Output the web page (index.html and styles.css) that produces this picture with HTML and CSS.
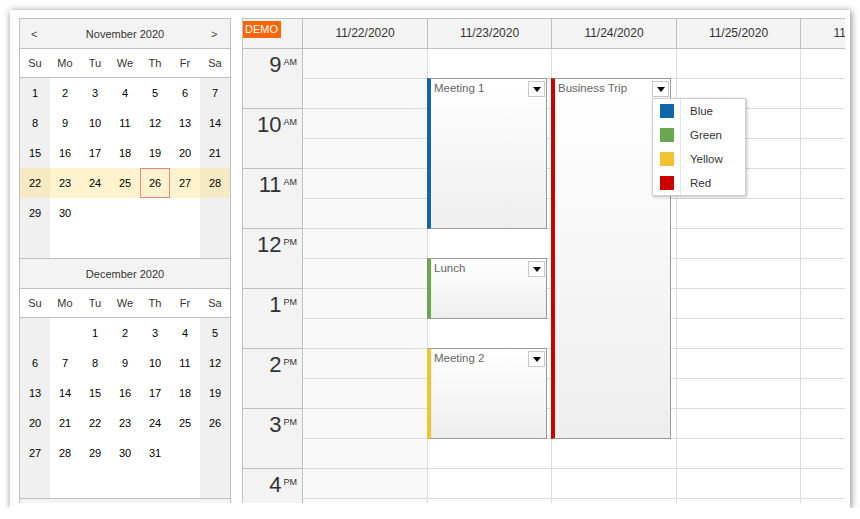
FILE: index.html
```html
<!DOCTYPE html>
<html lang="en">

<head>
    <meta charset="UTF-8">
    <meta name="viewport" content="width=device-width, initial-scale=1.0">
    <title>Calendar</title>
    <link rel="stylesheet" href="styles.css">
</head>

<body>
    <div class="frame">
        <!-- navigator -->
        <div class="nav">
            <div class="month">
                <div class="title"><span class="arrow">&lt;</span><span>November 2020</span><span class="arrow">&gt;</span></div>
                <div class="dow"><span>Su</span><span>Mo</span><span>Tu</span><span>We</span><span>Th</span><span>Fr</span><span>Sa</span></div>
                <div class="days">
                    <span class="we">1</span><span>2</span><span>3</span><span>4</span><span>5</span><span>6</span><span class="we">7</span>
                    <span class="we">8</span><span>9</span><span>10</span><span>11</span><span>12</span><span>13</span><span class="we">14</span>
                    <span class="we">15</span><span>16</span><span>17</span><span>18</span><span>19</span><span>20</span><span class="we">21</span>
                    <span class="we sel">22</span><span class="sel">23</span><span class="sel">24</span><span class="sel">25</span><span class="sel today">26</span><span class="sel">27</span><span class="we sel">28</span>
                    <span class="we">29</span><span>30</span><span></span><span></span><span></span><span></span><span class="we"></span>
                    <span class="we"></span><span></span><span></span><span></span><span></span><span></span><span class="we"></span>
                </div>
            </div>
            <div class="month">
                <div class="title"><span class="arrow"></span><span>December 2020</span><span class="arrow"></span></div>
                <div class="dow"><span>Su</span><span>Mo</span><span>Tu</span><span>We</span><span>Th</span><span>Fr</span><span>Sa</span></div>
                <div class="days">
                    <span class="we"></span><span></span><span>1</span><span>2</span><span>3</span><span>4</span><span class="we">5</span>
                    <span class="we">6</span><span>7</span><span>8</span><span>9</span><span>10</span><span>11</span><span class="we">12</span>
                    <span class="we">13</span><span>14</span><span>15</span><span>16</span><span>17</span><span>18</span><span class="we">19</span>
                    <span class="we">20</span><span>21</span><span>22</span><span>23</span><span>24</span><span>25</span><span class="we">26</span>
                    <span class="we">27</span><span>28</span><span>29</span><span>30</span><span>31</span><span></span><span class="we"></span>
                    <span class="we"></span><span></span><span></span><span></span><span></span><span></span><span class="we"></span>
                </div>
            </div>
            <!-- next month, only its top edge is visible -->
            <div class="month">
                <div class="title"></div>
            </div>
        </div>

        <!-- calendar -->
        <div class="cal">
            <div class="cal-head">
                <div class="corner"><span class="demo">DEMO</span></div>
                <div class="col-head">11/22/2020</div>
                <div class="col-head">11/23/2020</div>
                <div class="col-head">11/24/2020</div>
                <div class="col-head">11/25/2020</div>
                <div class="col-head">11/26/2020</div>
            </div>
            <div class="cal-body">
                <div class="times">
                    <div class="hour"><span class="num">9</span><span class="ampm">AM</span></div>
                    <div class="hour"><span class="num">10</span><span class="ampm">AM</span></div>
                    <div class="hour"><span class="num">11</span><span class="ampm">AM</span></div>
                    <div class="hour"><span class="num">12</span><span class="ampm">PM</span></div>
                    <div class="hour"><span class="num">1</span><span class="ampm">PM</span></div>
                    <div class="hour"><span class="num">2</span><span class="ampm">PM</span></div>
                    <div class="hour"><span class="num">3</span><span class="ampm">PM</span></div>
                    <div class="hour"><span class="num">4</span><span class="ampm">PM</span></div>
                </div>
                <div class="col off">
                    <div class="cell"></div><div class="cell"></div><div class="cell"></div><div class="cell"></div>
                    <div class="cell"></div><div class="cell"></div><div class="cell"></div><div class="cell"></div>
                    <div class="cell"></div><div class="cell"></div><div class="cell"></div><div class="cell"></div>
                    <div class="cell"></div><div class="cell"></div><div class="cell"></div><div class="cell"></div>
                </div>
                <div class="col">
                    <div class="cell"></div><div class="cell"></div><div class="cell"></div><div class="cell"></div>
                    <div class="cell"></div><div class="cell"></div><div class="cell"></div><div class="cell"></div>
                    <div class="cell"></div><div class="cell"></div><div class="cell"></div><div class="cell"></div>
                    <div class="cell"></div><div class="cell"></div><div class="cell"></div><div class="cell"></div>
                    <div class="event blue" style="top: 29px; height: 151px;">Meeting 1<span class="btn"></span></div>
                    <div class="event green" style="top: 209px; height: 61px;">Lunch<span class="btn"></span></div>
                    <div class="event yellow" style="top: 299px; height: 91px;">Meeting 2<span class="btn"></span></div>
                </div>
                <div class="col">
                    <div class="cell"></div><div class="cell"></div><div class="cell"></div><div class="cell"></div>
                    <div class="cell"></div><div class="cell"></div><div class="cell"></div><div class="cell"></div>
                    <div class="cell"></div><div class="cell"></div><div class="cell"></div><div class="cell"></div>
                    <div class="cell"></div><div class="cell"></div><div class="cell"></div><div class="cell"></div>
                    <div class="event red" style="top: 29px; height: 361px;">Business Trip<span class="btn"></span></div>
                </div>
                <div class="col">
                    <div class="cell"></div><div class="cell"></div><div class="cell"></div><div class="cell"></div>
                    <div class="cell"></div><div class="cell"></div><div class="cell"></div><div class="cell"></div>
                    <div class="cell"></div><div class="cell"></div><div class="cell"></div><div class="cell"></div>
                    <div class="cell"></div><div class="cell"></div><div class="cell"></div><div class="cell"></div>
                </div>
                <div class="col">
                    <div class="cell"></div><div class="cell"></div><div class="cell"></div><div class="cell"></div>
                    <div class="cell"></div><div class="cell"></div><div class="cell"></div><div class="cell"></div>
                    <div class="cell"></div><div class="cell"></div><div class="cell"></div><div class="cell"></div>
                    <div class="cell"></div><div class="cell"></div><div class="cell"></div><div class="cell"></div>
                </div>
            </div>

            <!-- context menu -->
            <div class="menu">
                <div class="item"><span class="icon"><i class="sq blue"></i></span><span class="label">Blue</span></div>
                <div class="item"><span class="icon"><i class="sq green"></i></span><span class="label">Green</span></div>
                <div class="item"><span class="icon"><i class="sq yellow"></i></span><span class="label">Yellow</span></div>
                <div class="item"><span class="icon"><i class="sq red"></i></span><span class="label">Red</span></div>
            </div>
        </div>
    </div>
</body>

</html>
```

FILE: styles.css
```css
* {
    padding: 0;
    margin: 0;
    box-sizing: border-box;
}

body {
    font-family: "Liberation Sans", Arial, sans-serif;
    background-color: #fff;
}

/* frame with shadow */
.frame {
    margin: 10px 0 0 10px;
    width: 840px;
    height: 498px;
    background-color: #fff;
    box-shadow: 1px 1px 7px rgba(0, 0, 0, 0.5);
    padding: 8px 5px 0 9px;
    display: flex;
    gap: 11px;
}

/* navigator */
.nav {
    width: 212px;
    height: 485px;
    border-left: 1px solid #c0c0c0;
    border-right: 1px solid #c0c0c0;
    overflow: hidden;
    flex: none;
    font-size: 11px;
}

.nav .title {
    height: 30px;
    border-top: 1px solid #c0c0c0;
    background-color: #f3f3f3;
    color: #333;
    display: flex;
    align-items: center;
    justify-content: space-between;
    padding: 0 11px;
}

.nav .arrow {
    width: 8px;
    color: #444;
}

.nav .dow {
    height: 29px;
    border-top: 1px solid #c0c0c0;
    display: grid;
    grid-template-columns: repeat(7, 30px);
    align-items: center;
    text-align: center;
    color: #333;
}

.nav .days {
    border-top: 1px solid #c0c0c0;
    display: grid;
    grid-template-columns: repeat(7, 30px);
    grid-auto-rows: 30px;
}

.nav .days span {
    line-height: 30px;
    text-align: center;
    color: #000;
}

.nav .days span.we {
    background-color: #f0f0f0;
}

.nav .days span.sel {
    background-color: #fff3cf;
}

.nav .days span.we.sel {
    background-color: #f6eac5;
}

.nav .days span.today {
    box-shadow: inset 0 0 0 1px #ee8585;
}

/* calendar */
.cal {
    position: relative;
    width: 603px;
    height: 485px;
    border-left: 1px solid #c0c0c0;
    border-top: 1px solid #c0c0c0;
    overflow: hidden;
    flex: none;
}

.cal-head {
    display: flex;
    height: 30px;
    border-bottom: 1px solid #c0c0c0;
    background-color: #f3f3f3;
}

.corner {
    flex: none;
    width: 60px;
    border-right: 1px solid #c0c0c0;
}

.demo {
    display: inline-block;
    background-color: #ff6600;
    color: #fff;
    font-size: 11px;
    line-height: 17px;
    padding: 0 3px 0 2px;
    margin-top: 0;
}

.col-head {
    flex: none;
    width: 125px;
    border-right: 1px solid #c0c0c0;
    font-size: 12px;
    color: #333;
    text-align: center;
    line-height: 29px;
    white-space: nowrap;
}

.col-head:nth-child(odd),
.col:nth-child(odd) {
    width: 124px;
}

.cal-body {
    display: flex;
}

.times {
    flex: none;
    width: 60px;
    border-right: 1px solid #c0c0c0;
    background-color: #f3f3f3;
}

.hour {
    height: 60px;
    border-bottom: 1px solid #c0c0c0;
    display: flex;
    justify-content: flex-end;
    align-items: flex-start;
    padding: 5px 5px 0 0;
    color: #333;
}

.hour .num {
    font-size: 22px;
    line-height: 22px;
}

.hour .ampm {
    font-size: 9px;
    line-height: 9px;
    margin: 4px 0 0 2px;
}

.col {
    position: relative;
    flex: none;
    width: 125px;
    border-right: 1px solid #dcdcdc;
}

.col .cell {
    height: 30px;
    border-bottom: 1px solid #dcdcdc;
}

.col.off {
    background-color: #f9f9f9;
}

/* events */
.event {
    position: absolute;
    left: -1px;
    width: 120px;
    border: 1px solid #999;
    border-left-width: 4px;
    background: linear-gradient(#fff, #eee);
    font-size: 11.5px;
    line-height: 14px;
    color: #666;
    padding: 2px 0 0 3px;
    white-space: nowrap;
}

.event.blue {
    border-left-color: #1066a8;
}

.event.green {
    border-left-color: #6aa84f;
}

.event.yellow {
    border-left-color: #f1c232;
}

.event.red {
    border-left-color: #cc0000;
}

.event .btn {
    position: absolute;
    top: 2px;
    right: 1px;
    width: 17px;
    height: 16px;
    border: 1px solid #c8c8c8;
    background-color: #fff;
}

/* triangle */
.event .btn::before {
    content: "";
    position: absolute;
    left: 4px;
    top: 5px;
    border-width: 5px 4px 0 4px;
    border-style: solid;
    border-color: #000 transparent transparent transparent;
}

/* menu */
.menu {
    position: absolute;
    left: 409px;
    top: 79px;
    width: 94px;
    height: 98px;
    background-color: #fff;
    border: 1px solid #cfcfcf;
    box-shadow: 1px 1px 3px rgba(0, 0, 0, 0.25);
    font-size: 11.5px;
    color: #333;
}

.menu .item {
    display: flex;
    align-items: center;
    height: 24px;
}

.menu .icon {
    flex: none;
    width: 28px;
    height: 24px;
    border-right: 1px solid #e3e3e3;
    display: flex;
    align-items: center;
    padding-left: 7px;
}

.menu .sq {
    width: 14px;
    height: 14px;
}

.menu .label {
    padding-left: 9px;
}

.sq.blue {
    background-color: #1066a8;
}

.sq.green {
    background-color: #6aa84f;
}

.sq.yellow {
    background-color: #f1c232;
}

.sq.red {
    background-color: #cc0000;
}
```
